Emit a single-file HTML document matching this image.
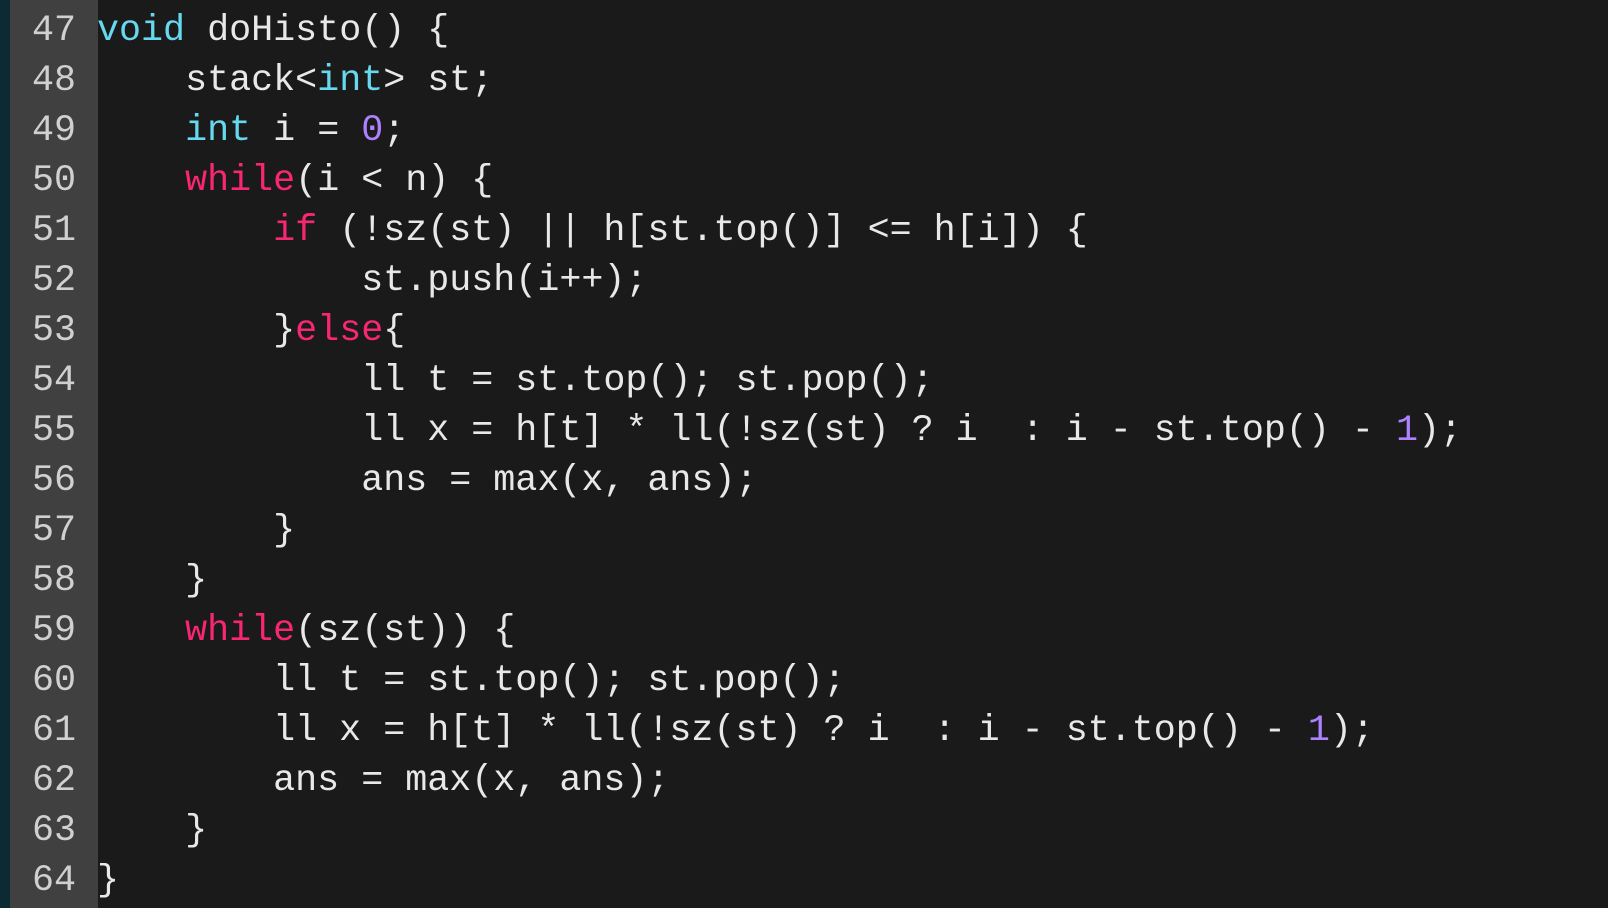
<!DOCTYPE html>
<html><head><meta charset="utf-8"><style>
html,body{margin:0;padding:0;width:1608px;height:908px;overflow:hidden;background:#1a1a1a}
.strip{position:absolute;left:0;top:0;width:10px;height:908px;background:#0b2a33}
.gut{position:absolute;left:10px;top:0;width:88px;height:908px;background:#404040}
.l{position:absolute;white-space:pre;font-family:"Liberation Mono",monospace;font-size:36.7px;line-height:50px;height:50px;color:#e8e8e8}
.nm{left:10px;width:66px;text-align:right;color:#d0d0d0}
.c{left:97px}
.k{color:#66d9ef}.p{color:#f92672}.n{color:#ae81ff}
</style></head><body>
<div class="strip"></div><div class="gut"></div>
<div class="l nm" style="top:6px">47</div><div class="l c" style="top:6px"><span class="k">void</span> doHisto() {</div>
<div class="l nm" style="top:56px">48</div><div class="l c" style="top:56px">    stack&lt;<span class="k">int</span>&gt; st;</div>
<div class="l nm" style="top:106px">49</div><div class="l c" style="top:106px">    <span class="k">int</span> i = <span class="n">0</span>;</div>
<div class="l nm" style="top:156px">50</div><div class="l c" style="top:156px">    <span class="p">while</span>(i &lt; n) {</div>
<div class="l nm" style="top:206px">51</div><div class="l c" style="top:206px">        <span class="p">if</span> (!sz(st) || h[st.top()] &lt;= h[i]) {</div>
<div class="l nm" style="top:256px">52</div><div class="l c" style="top:256px">            st.push(i++);</div>
<div class="l nm" style="top:306px">53</div><div class="l c" style="top:306px">        }<span class="p">else</span>{</div>
<div class="l nm" style="top:356px">54</div><div class="l c" style="top:356px">            ll t = st.top(); st.pop();</div>
<div class="l nm" style="top:406px">55</div><div class="l c" style="top:406px">            ll x = h[t] * ll(!sz(st) ? i  : i - st.top() - <span class="n">1</span>);</div>
<div class="l nm" style="top:456px">56</div><div class="l c" style="top:456px">            ans = max(x, ans);</div>
<div class="l nm" style="top:506px">57</div><div class="l c" style="top:506px">        }</div>
<div class="l nm" style="top:556px">58</div><div class="l c" style="top:556px">    }</div>
<div class="l nm" style="top:606px">59</div><div class="l c" style="top:606px">    <span class="p">while</span>(sz(st)) {</div>
<div class="l nm" style="top:656px">60</div><div class="l c" style="top:656px">        ll t = st.top(); st.pop();</div>
<div class="l nm" style="top:706px">61</div><div class="l c" style="top:706px">        ll x = h[t] * ll(!sz(st) ? i  : i - st.top() - <span class="n">1</span>);</div>
<div class="l nm" style="top:756px">62</div><div class="l c" style="top:756px">        ans = max(x, ans);</div>
<div class="l nm" style="top:806px">63</div><div class="l c" style="top:806px">    }</div>
<div class="l nm" style="top:856px">64</div><div class="l c" style="top:856px">}</div>
</body></html>
